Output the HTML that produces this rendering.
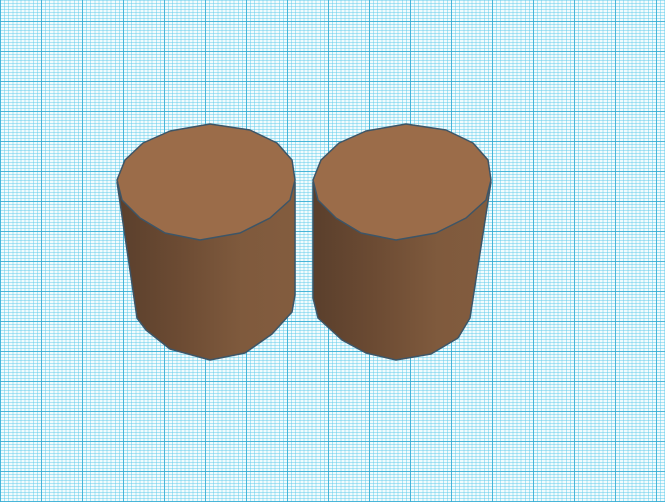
<!DOCTYPE html>
<html><head><style>
html,body{margin:0;padding:0;width:665px;height:502px;overflow:hidden}
#plane{position:absolute;left:0;top:0;width:665px;height:502px;
background:
repeating-linear-gradient(90deg,rgba(50,170,210,.8) 0 1px,transparent 1px 41px),
repeating-linear-gradient(0deg,rgba(50,170,210,.8) 0 1px,transparent 1px 30px),
repeating-linear-gradient(90deg,rgba(100,205,235,.5) 0 1px,transparent 1px 4.1px),
repeating-linear-gradient(0deg,rgba(100,205,235,.5) 0 1px,transparent 1px 3px),#f2fbfd}
svg{position:absolute;left:0;top:0}
</style></head><body>
<div id="plane"></div>
<svg width="665" height="502" viewBox="0 0 665 502">
<defs>
<linearGradient id="s" x1="0" x2="1" y1="0" y2="0">
<stop offset="0" stop-color="#5a3f2c"/><stop offset="0.35" stop-color="#6c4b33"/><stop offset="0.7" stop-color="#7f5a3d"/><stop offset="1" stop-color="#835c3e"/>
</linearGradient>
</defs>
<g stroke="#3d5567" stroke-width="1.5" stroke-linejoin="round">
<path d="M117,182 L137,318 L146,330 L170,349 L210,360 L245,353 L272,334 L292,312 L295,295 L295,182 Z" fill="url(#s)"/>
<path d="M117,180 L125,160 L143,143 L170,131 L210,124 L250,130 L277,143 L292,160 L295,180 L290,200 L270,218 L240,233 L200,240 L165,233 L140,218 L122,200 Z" fill="#9b6c49"/>
</g>
<g stroke="#3d5567" stroke-width="1.5" stroke-linejoin="round" transform="translate(196,0)">
<path d="M117,182 L117,298 L122,318 L146,340 L170,353 L200,360 L235,354 L262,338 L274,318 L295,182 Z" fill="url(#s)"/>
<path d="M117,180 L125,160 L143,143 L170,131 L210,124 L250,130 L277,143 L292,160 L295,180 L290,200 L270,218 L240,233 L200,240 L165,233 L140,218 L122,200 Z" fill="#9b6c49"/>
</g>
</svg>
</body></html>
